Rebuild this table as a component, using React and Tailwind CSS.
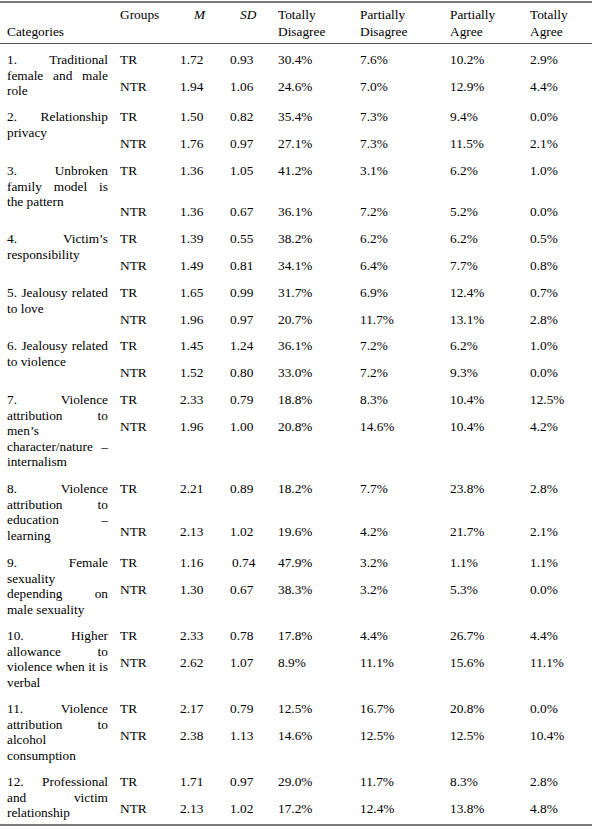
import React from "react";

const rows = [
  {
    lines: ["1. Traditional", "female and male", "role"],
    h: "h-[57px]",
    gap: "mt-[12px]",
    tr: ["1.72", "0.93", "30.4%", "7.6%", "10.2%", "2.9%"],
    ntr: ["1.94", "1.06", "24.6%", "7.0%", "12.9%", "4.4%"],
  },
  {
    lines: ["2. Relationship", "privacy"],
    h: "h-[54px]",
    gap: "mt-[12px]",
    tr: ["1.50", "0.82", "35.4%", "7.3%", "9.4%", "0.0%"],
    ntr: ["1.76", "0.97", "27.1%", "7.3%", "11.5%", "2.1%"],
  },
  {
    lines: ["3. Unbroken", "family model is", "the pattern"],
    h: "h-[68px]",
    gap: "mt-[26px]",
    tr: ["1.36", "1.05", "41.2%", "3.1%", "6.2%", "1.0%"],
    ntr: ["1.36", "0.67", "36.1%", "7.2%", "5.2%", "0.0%"],
  },
  {
    lines: ["4. Victim\u2019s", "responsibility"],
    h: "h-[54px]",
    gap: "mt-[12px]",
    tr: ["1.39", "0.55", "38.2%", "6.2%", "6.2%", "0.5%"],
    ntr: ["1.49", "0.81", "34.1%", "6.4%", "7.7%", "0.8%"],
  },
  {
    lines: ["5. Jealousy related", "to love"],
    h: "h-[53px]",
    gap: "mt-[12px]",
    tr: ["1.65", "0.99", "31.7%", "6.9%", "12.4%", "0.7%"],
    ntr: ["1.96", "0.97", "20.7%", "11.7%", "13.1%", "2.8%"],
  },
  {
    lines: ["6. Jealousy related", "to violence"],
    h: "h-[54px]",
    gap: "mt-[12px]",
    tr: ["1.45", "1.24", "36.1%", "7.2%", "6.2%", "1.0%"],
    ntr: ["1.52", "0.80", "33.0%", "7.2%", "9.3%", "0.0%"],
  },
  {
    lines: ["7. Violence", "attribution to", "men\u2019s", "character/nature \u2013", "internalism"],
    h: "h-[89px]",
    gap: "mt-[12px]",
    tr: ["2.33", "0.79", "18.8%", "8.3%", "10.4%", "12.5%"],
    ntr: ["1.96", "1.00", "20.8%", "14.6%", "10.4%", "4.2%"],
  },
  {
    lines: ["8. Violence", "attribution to", "education \u2013", "learning"],
    h: "h-[74px]",
    gap: "mt-[28px]",
    tr: ["2.21", "0.89", "18.2%", "7.7%", "23.8%", "2.8%"],
    ntr: ["2.13", "1.02", "19.6%", "4.2%", "21.7%", "2.1%"],
  },
  {
    lines: ["9. Female", "sexuality", "depending on", "male sexuality"],
    h: "h-[73px]",
    gap: "mt-[12px]",
    tr: ["1.16", "0.74", "47.9%", "3.2%", "1.1%", "1.1%"],
    ntr: ["1.30", "0.67", "38.3%", "3.2%", "5.3%", "0.0%"],
    sdShift: true,
  },
  {
    lines: ["10. Higher", "allowance to", "violence when it is", "verbal"],
    h: "h-[73px]",
    gap: "mt-[12px]",
    tr: ["2.33", "0.78", "17.8%", "4.4%", "26.7%", "4.4%"],
    ntr: ["2.62", "1.07", "8.9%", "11.1%", "15.6%", "11.1%"],
  },
  {
    lines: ["11. Violence", "attribution to", "alcohol", "consumption"],
    h: "h-[73px]",
    gap: "mt-[12px]",
    tr: ["2.17", "0.79", "12.5%", "16.7%", "20.8%", "0.0%"],
    ntr: ["2.38", "1.13", "14.6%", "12.5%", "12.5%", "10.4%"],
  },
  {
    lines: ["12. Professional", "and victim", "relationship"],
    h: "h-[58px]",
    gap: "mt-[12px]",
    tr: ["1.71", "0.97", "29.0%", "11.7%", "8.3%", "2.8%"],
    ntr: ["2.13", "1.02", "17.2%", "12.4%", "13.8%", "4.8%"],
  },
];

const cols = "grid grid-cols-[60px_50px_48px_82px_90px_80px_1fr] leading-[15px]";

const DataRow = ({ group, values, className = "", sdShift = false }) => (
  <div className={`${cols} ${className}`}>
    <span>{group}</span>
    <span>{values[0]}</span>
    <span className={sdShift ? "pl-[2px]" : ""}>{values[1]}</span>
    <span>{values[2]}</span>
    <span>{values[3]}</span>
    <span>{values[4]}</span>
    <span>{values[5]}</span>
  </div>
);

const App = () => {
  return (
    <div className="w-[604px] min-h-[829px] bg-white pt-px font-['Liberation_Serif','Times_New_Roman',serif] text-[13.33px] text-black">
      <div className="w-[592px] border-t-2 border-b-2 border-[#7a7a7a]">

        {/* Header */}
        <div className="flex h-[41px] border-b border-[#555] pl-[7px] pt-[4px] leading-[16.5px]">
          <div className="w-[113px] pt-[16.5px]">Categories</div>
          <div className="grid flex-1 grid-cols-[60px_50px_48px_82px_90px_80px_1fr]">
            <span>Groups</span>
            <span className="pl-[14px] italic">M</span>
            <span className="pl-[10px] italic">SD</span>
            <span>Totally<br />Disagree</span>
            <span>Partially<br />Disagree</span>
            <span>Partially<br />Agree</span>
            <span>Totally<br />Agree</span>
          </div>
        </div>

        {/* Body */}
        {rows.map((row, i) => (
          <div key={i} className={`flex pl-[7px] pt-[8px] ${row.h}`}>
            <div className="mr-[12px] w-[101px] leading-[15.5px]">
              {row.lines.map((line, j) => (
                <div
                  key={j}
                  className={j < row.lines.length - 1 ? "text-justify [text-align-last:justify]" : ""}
                >
                  {line}
                </div>
              ))}
            </div>
            <div className="flex-1">
              <DataRow group="TR" values={row.tr} sdShift={row.sdShift} />
              <DataRow group="NTR" values={row.ntr} className={row.gap} />
            </div>
          </div>
        ))}
      </div>
    </div>
  );
};

export default App;
